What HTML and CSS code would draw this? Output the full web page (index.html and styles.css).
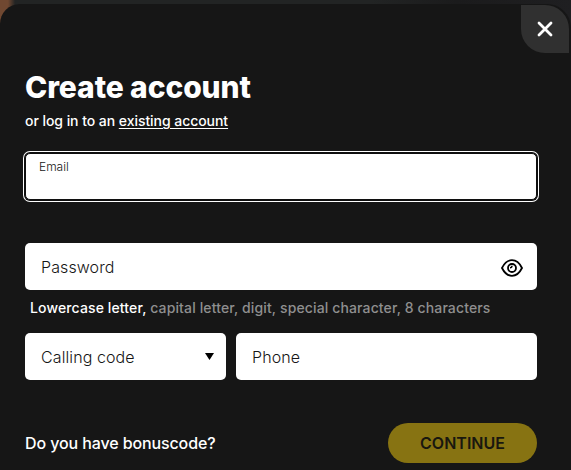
FILE: index.html
```html
<!DOCTYPE html>
<html lang="en">

<head>
    <meta charset="UTF-8">
    <title>Create account</title>
    <link rel="stylesheet" href="styles.css">
</head>

<body>
    <div class="modal">
        <button class="close" type="button" aria-label="Close">
            <svg width="16" height="16" viewBox="0 0 16 16">
                <path d="M2 2L14 14M14 2L2 14" />
            </svg>
        </button>

        <h1>Create account</h1>
        <p class="login">or log in to an <a href="#">existing account</a></p>

        <form id="form">
            <div class="field field-active">
                <label for="email">Email</label>
                <input type="text" id="email" name="email">
            </div>

            <div class="field field-password">
                <label for="password">Password</label>
                <input type="password" id="password" name="password">
                <svg class="eye" width="22" height="18" viewBox="0 0 22 18">
                    <path d="M1 9C3.500 4 7 1.200 11 1.200S18.500 4 21 9C18.500 14 15 16.800 11 16.800S3.500 14 1 9Z" />
                    <circle cx="11" cy="9" r="4" />
                    <path class="glint" d="M11 6.800A2 2 0 0 1 9 8.800" />
                </svg>
            </div>
            <p class="rules"><span>Lowercase letter,</span> capital letter, digit, special character, 8 characters</p>

            <div class="row">
                <div class="field field-code">
                    <label for="code">Calling code</label>
                    <input type="text" id="code" name="code">
                    <svg class="arrow" width="9" height="7" viewBox="0 0 9 7">
                        <path d="M0 0H9L4.500 7Z" />
                    </svg>
                </div>
                <div class="field field-phone">
                    <label for="phone">Phone</label>
                    <input type="text" id="phone" name="phone">
                </div>
            </div>

            <div class="footer">
                <span class="bonus">Do you have bonuscode?</span>
                <button class="submit" type="submit">CONTINUE</button>
            </div>
        </form>
    </div>
</body>

</html>
```
FILE: styles.css
```css
body {
    font-family: Inter, "Liberation Sans", sans-serif;
    background: linear-gradient(to right, #704831 0, #704831 8px, #222424 15px, #222424 65%, #1b1b1c 80%, #1f1f21 100%);
    margin: 0;
    padding: 4px 0 0;
    height: 466px;
    overflow: hidden;
    color: #fff;
}

.modal {
    position: relative;
    box-sizing: border-box;
    height: 466px;
    padding: 65px 34px 0 25px;
    background-color: #161616;
    border-radius: 20px 24px 0 0;
}

.close {
    position: absolute;
    top: 1px;
    right: 2px;
    display: flex;
    align-items: center;
    justify-content: center;
    width: 48px;
    height: 48px;
    padding: 0;
    border: none;
    border-radius: 0 24px 0 24px;
    background-color: #303030;
    cursor: pointer;
}

.close path {
    stroke: #fff;
    stroke-width: 2.8;
    stroke-linecap: round;
}

h1 {
    margin: 0;
    font-size: 30px;
    line-height: 36px;
    font-weight: 800;
    letter-spacing: -0.1px;
}

.login {
    margin: 6px 0 22px;
    font-size: 14px;
    line-height: 20px;
    font-weight: 500;
    letter-spacing: -0.05px;
}

.login a {
    color: #fff;
    text-underline-offset: 2px;
}

.field {
    display: flex;
    align-items: center;
    box-sizing: border-box;
    height: 47px;
    padding: 0 14px 0 16px;
    background-color: #fff;
    border-radius: 5px;
}

.field label {
    flex: none;
    font-size: 16px;
    line-height: 24px;
    font-weight: 300;
    letter-spacing: 0.1px;
    color: #161616;
}

.field input {
    flex: 1;
    min-width: 0;
    padding: 0;
    border: none;
    outline: none;
    background: none;
}

.field-active {
    align-items: flex-start;
    padding: 5px 13px 0;
    border: 1px solid #101010;
    box-shadow: 0 0 0 1px #101010, 0 0 0 2px #fff;
}

.field-active label {
    font-size: 12px;
    line-height: 16px;
    letter-spacing: 0;
}

.field-password {
    margin-top: 43px;
}

.eye {
    flex: none;
    margin-top: 3px;
    fill: none;
    stroke: #000;
    stroke-width: 1.8;
    overflow: visible;
}

.eye .glint {
    stroke-width: 1.4;
}

.rules {
    margin: 8px 0 15px 5px;
    font-size: 14px;
    line-height: 20px;
    font-weight: 500;
    letter-spacing: 0.13px;
    color: #8f8f8f;
    white-space: nowrap;
}

.rules span {
    color: #fff;
}

.row {
    display: flex;
    gap: 10px;
}

.field-code {
    width: 201px;
    padding-right: 12px;
}

.field-phone {
    flex: 1;
}

.arrow {
    flex: none;
    margin-top: -1px;
}

.footer {
    display: flex;
    align-items: center;
    justify-content: space-between;
    margin-top: 43px;
}

.bonus {
    font-size: 16px;
    font-weight: 500;
    letter-spacing: -0.11px;
}

.submit {
    width: 149px;
    height: 40px;
    padding: 0;
    border: none;
    border-radius: 20px;
    background-color: #877312;
    color: #19170f;
    font-family: inherit;
    font-size: 16px;
    font-weight: 600;
    cursor: pointer;
}
```
